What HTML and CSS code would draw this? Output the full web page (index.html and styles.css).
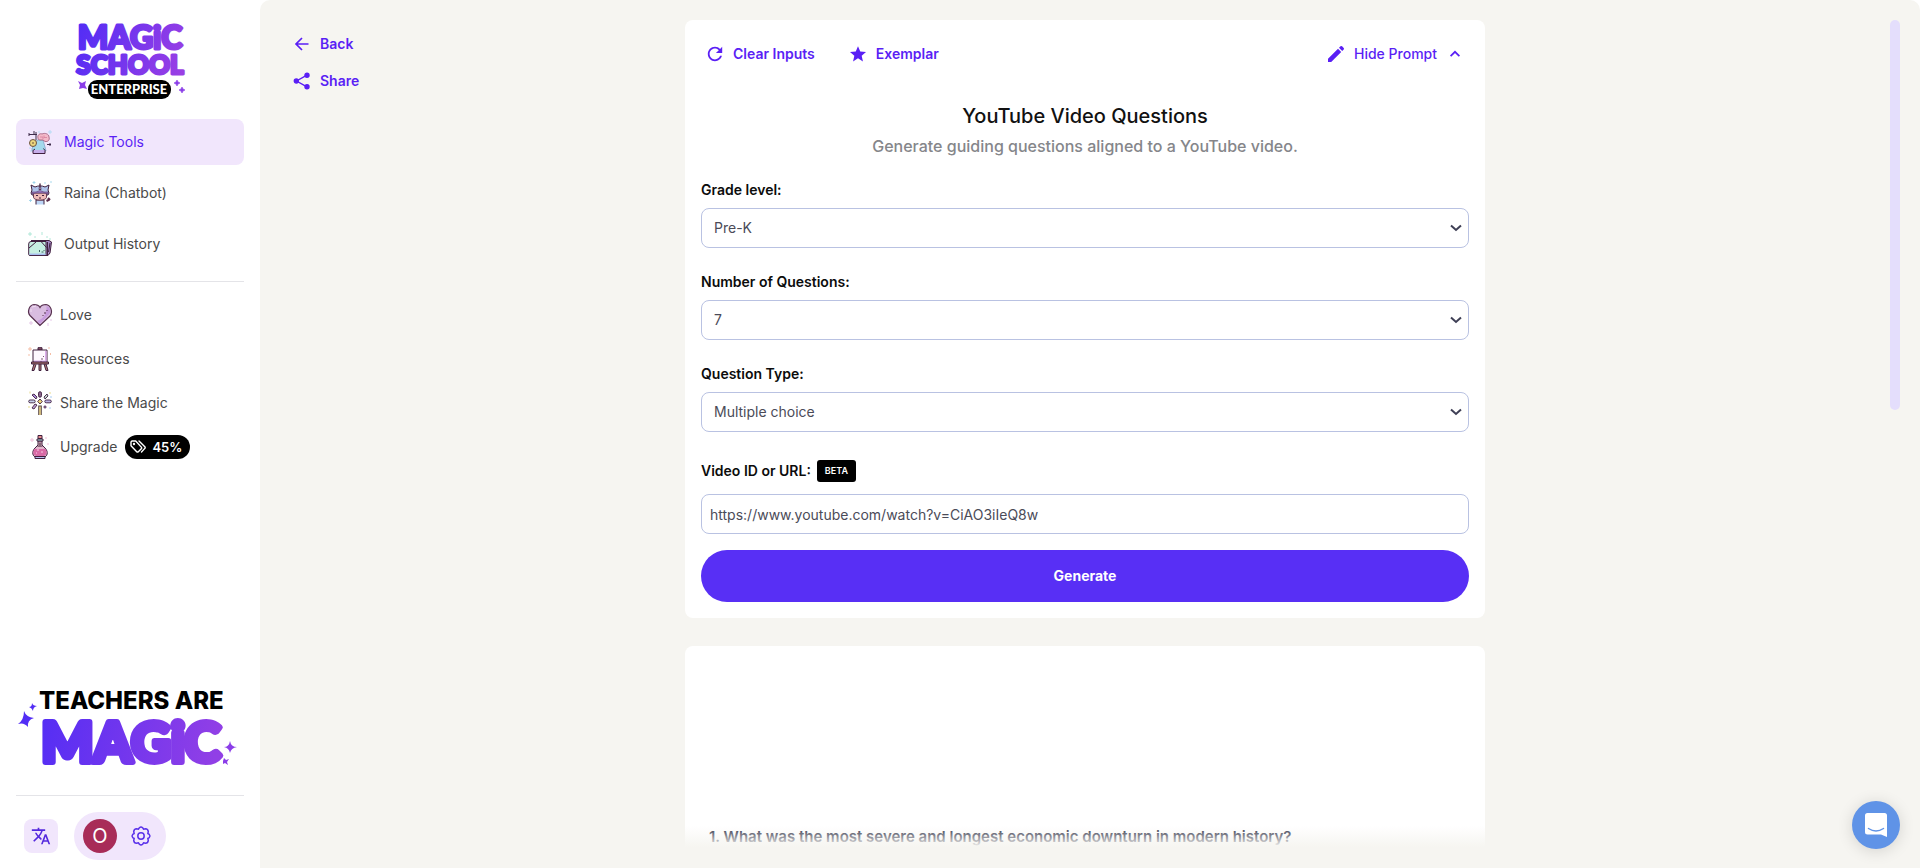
FILE: index.html
```html
<!DOCTYPE html>
<html lang="en">
<head>
<meta charset="utf-8">
<title>YouTube Video Questions</title>
<link rel="stylesheet" href="styles.css">
</head>
<body>
<div class="app">
  <aside class="sidebar">
    <a class="logo" href="#" aria-label="Home">
      <svg width="112" height="80" viewBox="0 0 112 80">
        <defs>
          <linearGradient id="brand" gradientUnits="userSpaceOnUse" x1="0" y1="0" x2="112" y2="40"><stop offset="0" stop-color="#4f2cf6"/><stop offset="1" stop-color="#9a3fe4"/></linearGradient>
        </defs>
        <g class="brand-text" fill="url(#brand)" stroke="url(#brand)" stroke-width="3" stroke-linejoin="round" text-anchor="middle">
          <text x="56" y="29" font-size="32">MAGiC</text>
          <text x="56" y="54" font-size="26">SCHOOL</text>
        </g>
        <rect x="14" y="60" width="83" height="19" rx="9" fill="#000"/>
        <text class="brand-text" x="55" y="74" font-size="13" text-anchor="middle" fill="#fff">ENTERPRISE</text>
        <g fill="#8a3de8">
          <path d="M4 61l4 2 4-2-1 4 2 4-4-1-4 1 1-4z"/>
          <path d="M103 60l1 2 2 1-2 1-1 2-1-2-2-1 2-1zM108 67l1 2 2 1-2 1-1 2-1-2-2-1 2-1z" stroke="#8a3de8" stroke-width=".6"/>
        </g>
      </svg>
    </a>

    <nav class="nav">
      <a class="nav-item active" href="#">
        <svg class="pic" viewBox="0 0 24 24">
          <path d="M1 4.500h8M6 1v3M8 2v8M1 3v3M19 14.500h4M22 13v3" stroke="#3e2c4b" fill="none"/>
          <path d="M9 10h6l2 7 1 4H4v-3l4-4z" fill="#a3d9ec" stroke="#7c9cc2" stroke-width=".7"/>
          <path d="M10 8c-1-3 2-5 4-4 3-1.500 7 0 7 3 1 3-1 5-4 4.500L15 10h-3c-1.500 0-2-1-2-2z" fill="#f3b9c9" stroke="#9d5876" stroke-width=".8"/>
          <path d="M12 7h3v2M16 5.500v2h3" fill="none" stroke="#d57f9c" stroke-width=".8"/>
          <circle cx="5" cy="13" r="3.500" fill="#ecd67b" stroke="#6b5540"/><path d="M4 13h2" stroke="#6b5540"/>
          <path d="M5 20h12v3.500H5z" fill="#c6aeea"/><path d="M7 19l-2 1.500v3h12v-3l-1.500-2" fill="none" stroke="#40203f"/>
          <path d="M22 0v4M20 2h4M11 1v2M1 18h2M3 20v2" stroke="#a9d9f4" stroke-width=".8"/>
        </svg>
        <span>Magic Tools</span>
      </a>
      <a class="nav-item" href="#">
        <svg class="pic" viewBox="0 0 24 24">
          <path d="M8 23.500V19h8v4.500" fill="#bcd6f6" stroke="#40203f"/>
          <path d="M4 9L3 4l4 2c3-1.500 7-1.500 10 0l4-2-1 5 1 3-1 2H4l-1-2z" fill="#afc3ea" stroke="#40203f"/>
          <path d="M5.500 12h13v4.500c-1 3.500-12 3.500-13 0z" fill="#eebcb8" stroke="#6a3b50"/>
          <path d="M4 13v-2h4l4-1.500 4 1.500h4v2l-4-1h-8z" fill="#9b7ac4" stroke="#573a67" stroke-width=".6"/>
          <path d="M12 2.500l-1 6h2z" fill="#efd9f6" stroke="#40203f" stroke-width=".8"/>
          <path d="M8 14.500h2M14 14.500h2M11 17h2" stroke="#40203f"/>
          <path d="M18.500 20l3-1.500M20 17l2 2" stroke="#5c2b4c" stroke-width="2"/>
          <path d="M6 0v3M4.500 1.500h3M17 1v2M22 1h2M1 19.500h3M2.500 18v3" stroke="#93cfe8" stroke-width=".8"/>
        </svg>
        <span>Raina (Chatbot)</span>
      </a>
      <a class="nav-item" href="#">
        <svg class="pic" viewBox="0 0 24 24">
          <path d="M3 8.500h18l2.500 1.500L22 21l-2 2.500H3" fill="#a58ac4" stroke="#40203f"/>
          <path d="M.7 12q0-2.500 2.300-2.500h15V23.500H2q-1.300 0-1.300-1.300z" fill="#c6efe2" stroke="#40203f"/>
          <path d="M1 16l7-6M13 9.500l5.500 6M19.500 10v13M22 11l-1.500 9" fill="none" stroke="#40203f"/>
          <path d="M1.500 22.300h16" stroke="#a9bdf0" stroke-width="1.500"/><path d="M11.500 18v2M13.500 20h2M16 18v1" stroke="#3e6264"/>
          <path d="M2 0v4M0 2h4M14 0v3M7 4v2M19 4v2M22 6v2" stroke="#a0e2cf" stroke-width=".8"/>
        </svg>
        <span>Output History</span>
      </a>
    </nav>
    <nav class="nav nav-more">
      <a class="nav-item" href="#">
        <svg class="pic" viewBox="0 0 24 24">
          <path d="M12 22.500L2 12.500C-1 9 1 2 6 1.500c3 0 5 1 6 3 1-2 3-3 6-3 5 .5 7 7.500 4 11.500z" fill="#d9bde0"/>
          <path d="M18.500 3c4.500 2 5 6 2 9l-8.500 9-3-3c7-2 10-8 9.500-15z" fill="#c79bdd"/>
          <path d="M12 22.500L2 12.500C-1 9 1 2 6 1.500c3 0 5 1 6 3 1-2 3-3 6-3 5 .5 7 7.500 4 11.500z" fill="none" stroke="#57304f" stroke-width="1.200"/>
          <path d="M17 9v2M19 7v1M15 12v1" stroke="#57304f"/><path d="M4 4l4-1M3 6v3" stroke="#f1dff2" fill="none"/>
          <path d="M3 18v4M1 20h4M20 20v3M23 16v2" stroke="#e5c6e8"/>
        </svg>
        <span>Love</span>
      </a>
      <a class="nav-item" href="#">
        <svg class="pic" viewBox="0 0 24 24">
          <path d="M6 17l-2 6.500h2l2-6M11 17v6.500h2V17M16 17l2 6.500h2L18 17" fill="#b77d78" stroke="#40203f"/>
          <path d="M10 3V.7h4V3z" fill="#8e5667" stroke="#40203f"/>
          <path d="M5 3h14v12H5z" fill="#fdf8fe" stroke="#40203f"/><path d="M17.800 4v10.200H6" stroke="#d9a9e8" stroke-width="1.500" fill="none"/>
          <path d="M3.500 15h17v2h-17z" fill="#a9706b" stroke="#40203f"/>
          <path d="M14 11v2M15.500 9v1M13 14v1" stroke="#57304f" stroke-width=".8"/>
          <path d="M2 0v4M0 2h4M21 0v2M22.500 6v2M1 7v2" stroke="#f4b79c" stroke-width=".9"/>
        </svg>
        <span>Resources</span>
      </a>
      <a class="nav-item" href="#">
        <svg class="pic" viewBox="0 0 24 24">
          <g stroke="#40203f" stroke-width=".9">
            <rect x="10.500" y=".7" width="3" height="5.500" rx="1.500" fill="#8b668d"/>
            <rect x=".7" y="9" width="6.500" height="2.800" rx="1.400" fill="#c9d3ee"/>
            <rect x="16.800" y="9" width="6.500" height="2.800" rx="1.400" fill="#bcb3e4"/>
            <path d="M4 4l2-1 3 3-1 2z" fill="#a98bd6"/><path d="M16 6l3-3 1 2-3 3z" fill="#c4d8cf"/><path d="M4 17l3-4 2 1-3 4z" fill="#c2a3d6"/>
            <path d="M12 8l2.300 2.500L12 13l-2.300-2.500z" fill="#edd57c"/>
            <path d="M17 14.500v3M15.500 16h3" stroke="#6d4b75" stroke-width="1.500"/>
          </g>
          <path d="M12 14.500V24" stroke="#564543" stroke-width="3.600"/><path d="M12 15.500V24" stroke="#cdb77c" stroke-width="2"/>
          <path d="M2 .5v2M22 1v2M1 15v2" stroke="#e7db8c"/><path d="M23 5v2M22 16v2" stroke="#a9cdf4"/>
        </svg>
        <span>Share the Magic</span>
      </a>
      <a class="nav-item" href="#">
        <svg class="pic" viewBox="0 0 24 24">
          <path d="M10 6h4v4l3 3c4 4 2 9-1 9H8c-3 0-5-5-1-9l3-3z" fill="#e3b6cc" stroke="#40203f"/>
          <path d="M10 .5h4v3h-4z" fill="#e58c8c" stroke="#40203f"/><path d="M9 4h6v2H9z" fill="#a5dedb" stroke="#40203f"/>
          <path d="M6.500 14h11c2 3 1 6-1.500 7H8c-3-1-3.500-4-1.500-7z" fill="#d96aa6"/><path d="M9 15h2M13 17h2M8 18h1" stroke="#f8cbe2"/>
          <path d="M10.500 7.500h3v3l1.500 1.500H9l1.500-1.500z" fill="#876778"/><path d="M7 21.500h10v2H7z" fill="#b6bdec" stroke="#40203f"/>
          <path d="M4 3v4M2 5h4M18 2v2M20 8v2" stroke="#f1c1da"/>
        </svg>
        <span>Upgrade</span>
        <span class="deal">
          <svg width="17" height="16" viewBox="0 0 17 16" fill="none" stroke="#fff" stroke-width="1.400" stroke-linejoin="round" stroke-linecap="round"><path d="M1 3.500v3.200l5.700 6q.8.800 1.600 0l3-3q.8-.8 0-1.600L5.700 2H2.200Q1 2 1 3.500z"/><path d="M9 2l5.800 5.800q.8.800 0 1.600L11.500 13"/><circle cx="4" cy="5" r=".5"/></svg>
          45%
        </span>
      </a>
    </nav>

    <div class="sidebar-foot">
      <svg class="slogan" viewBox="0 0 228 84">
        <defs>
          <linearGradient id="slogan-fill" gradientUnits="userSpaceOnUse" x1="20" y1="0" x2="205" y2="30"><stop offset="0" stop-color="#522df5"/><stop offset="1" stop-color="#913fe6"/></linearGradient>
        </defs>
        <text class="slogan-top" x="23" y="20" font-size="24">TEACHERS ARE</text>
        <text class="brand-text" x="115" y="73" fill="url(#slogan-fill)" stroke="url(#slogan-fill)" stroke-width="6" stroke-linejoin="round" text-anchor="middle" font-size="55">MAGiC</text>
        <path d="M8 22q2 6 10 7-7 2-6 9-4-5-10-3 6-4 6-13zM16 14q1 3 5 3-4 1-4 5-1-3-4-4 3 0 3-4z" fill="#522df5"/>
        <path d="M214 52q1 6 7 6-6 1-7 6-1-5-6-6 5 0 6-6zM208 69l2 2 3-1-2 3 1 3-3-2-2 1v-3z" fill="#8b3de8"/>
      </svg>
      <div class="account">
        <button class="language" aria-label="Language">
          <svg width="20" height="20" viewBox="0 0 24 24" fill="#5529dd"><path d="m12.870 15.070-2.540-2.510.03-.03c1.740-1.940 2.980-4.170 3.710-6.530H17V4h-7V2H8v2H1v1.990h11.170C11.500 7.920 10.440 9.750 9 11.350 8.070 10.320 7.300 9.190 6.690 8h-2c.73 1.630 1.730 3.170 2.980 4.560l-5.090 5.020L4 19l5-5 3.110 3.110zM18.500 10h-2L12 22h2l1.120-3h4.750L21 22h2zm-2.620 7 1.620-4.330L19.120 17z"/></svg>
        </button>
        <button class="profile" aria-label="Account settings">
          <span class="avatar">O</span>
          <svg width="20" height="20" viewBox="0 0 20 20" fill="none" stroke="#5a31ea" stroke-width="1.500" stroke-linejoin="round"><path d="M8.400 1.700Q10 .3 11.600 1.700L12.500 3.200l1.900-.5q2.600 0 2.900 2.900l-.5 1.900 1.500.9q1.400 1.600 0 3.200l-1.500.9.500 1.900q-.3 2.900-2.900 2.900l-1.900-.5-.9 1.500q-1.600 1.400-3.200 0l-.9-1.500-1.900.5q-2.600 0-2.900-2.900l.5-1.900-1.500-.9q-1.400-1.600 0-3.200l1.500-.9-.5-1.900q.3-2.900 2.900-2.900l1.900.5z"/><circle cx="10" cy="10" r="3.200"/></svg>
        </button>
      </div>
    </div>
  </aside>

  <main class="main">
    <div class="page-links">
      <a class="action" href="#"><svg width="18" height="18" viewBox="0 0 18 18" fill="none" stroke="currentColor" stroke-width="1.700"><path d="M15.500 9H3M9 3L3 9l6 6"/></svg>Back</a>
      <button class="action"><svg width="18" height="18" viewBox="0 0 18 18" fill="currentColor" stroke="currentColor" stroke-width="1.400"><path d="M14 3.200L3.500 9 14 14.800" fill="none"/><circle cx="14" cy="3.200" r="2"/><circle cx="3.300" cy="9" r="2"/><circle cx="14" cy="14.800" r="2"/></svg>Share</button>
    </div>

    <div class="column">
      <section class="card">
        <div class="toolbar">
          <button class="action"><svg width="18" height="18" viewBox="2 2 20 20" fill="currentColor"><path d="M17.650 6.350C16.200 4.900 14.210 4 12 4c-4.420 0-7.990 3.580-7.990 8s3.570 8 7.990 8c3.730 0 6.840-2.550 7.730-6h-2.080c-.82 2.330-3.040 4-5.650 4-3.310 0-6-2.690-6-6s2.690-6 6-6c1.660 0 3.140.69 4.220 1.780L13 11h7V4z"/></svg>Clear Inputs</button>
          <button class="action"><svg width="18" height="18" viewBox="0 0 24 24" fill="currentColor"><path d="M12 17.800l6.600 4.200-1.700-7.600 5.800-5.100-7.700-.7L12 1.500 9 8.600l-7.700.7 5.800 5.100L5.400 22z"/></svg>Exemplar</button>
          <button class="action toggle"><svg width="18" height="18" viewBox="0 0 18 18" fill="currentColor"><path d="M1 13.800L11 3.800 14.200 7l-10 10H1zM12 2.800l1.500-1.500q.8-.7 1.600 0l1.600 1.600q.7.800 0 1.600L15.200 6z"/></svg>Hide Prompt<svg class="chevron" width="10" height="18" viewBox="0 0 10 18" fill="none" stroke="currentColor" stroke-width="1.700"><path d="M.6 11.200L5 6.800l4.400 4.400"/></svg></button>
        </div>
        <h1 class="title">YouTube Video Questions</h1>
        <p class="subtitle">Generate guiding questions aligned to a YouTube video.</p>
        <form class="form">
          <div class="field">
            <label for="grade">Grade level:</label>
            <div class="select"><select id="grade"><option>Pre-K</option></select><svg viewBox="0 0 10 6" width="10" height="6"><path d="M0 .5l5 4.500 5-4.500"/></svg></div>
          </div>
          <div class="field">
            <label for="count">Number of Questions:</label>
            <div class="select"><select id="count"><option>7</option></select><svg viewBox="0 0 10 6" width="10" height="6"><path d="M0 .5l5 4.500 5-4.500"/></svg></div>
          </div>
          <div class="field">
            <label for="type">Question Type:</label>
            <div class="select"><select id="type"><option>Multiple choice</option></select><svg viewBox="0 0 10 6" width="10" height="6"><path d="M0 .5l5 4.500 5-4.500"/></svg></div>
          </div>
          <div class="field">
            <div class="label-row"><label for="video">Video ID or URL:</label><span class="beta">BETA</span></div>
            <input class="text-input" id="video" type="text" value="https://www.youtube.com/watch?v=CiAO3iIeQ8w">
          </div>
          <button class="generate" type="button">Generate</button>
        </form>
      </section>
      <section class="card output">
        <p class="question">1. What was the most severe and longest economic downturn in modern history?</p>
      </section>
    </div>
    <div class="scroll-track"><div class="scroll-thumb"></div></div>
    <div class="fade"></div>
    <button class="chat" aria-label="Open chat">
      <svg width="22" height="24" viewBox="0 0 22 24"><path d="M2.500 0h17Q22 0 22 2.500V24l-6-2.500H2.500Q0 21.500 0 19V2.500Q0 0 2.500 0z" fill="#fff"/><path d="M3.500 15.500q7.500 5 15 0" fill="none" stroke="#5f93e7" stroke-width="1.500" stroke-linecap="round"/></svg>
    </button>
  </main>
</div>
</body>
</html>
```

FILE: styles.css
```css
* { box-sizing: border-box; }
body { margin: 0; font-family: Inter, "Liberation Sans", sans-serif; font-size: 14px; line-height: 20px; background: #fff; }
button { font: inherit; border: 0; background: none; padding: 0; cursor: pointer; }
a { color: inherit; text-decoration: none; }
svg { flex: none; overflow: visible; }

.app { display: flex; height: 100vh; }

.sidebar { display: flex; flex-direction: column; width: 260px; padding: 20px 16px 8px; flex: none; }
.logo { align-self: center; height: 80px; margin-bottom: 19px; }
.brand-text { font-family: Lato, sans-serif; font-weight: 900; }
.nav { display: flex; flex-direction: column; gap: 5px; }
.nav-item { display: flex; align-items: center; gap: 12px; height: 46px; padding: 0 12px; border-radius: 8px; color: #4a4a4a; }
.nav-item.active { background: #f1e6fc; color: #5a1ff5; }
.pic { width: 24px; height: 24px; }
.nav-more { gap: 0; margin-top: 14px; padding-top: 11px; border-top: 1px solid #e4e4e8; }
.nav-more .nav-item { gap: 8px; height: 44px; }
.deal { display: flex; align-items: center; gap: 5px; height: 24px; padding: 0 8px 0 5px; border-radius: 12px; background: #000; color: #fff; font-size: 13px; font-weight: 600; }

.sidebar-foot { margin-top: auto; }
.slogan { display: block; width: 100%; height: 84px; margin-bottom: 22px; }
.slogan-top { font-family: Inter, sans-serif; font-weight: 800; }
.account { display: flex; align-items: center; gap: 16px; padding: 16px 8px 0; border-top: 1px solid #e4e4e8; }
.language { display: grid; place-items: center; width: 34px; height: 34px; border-radius: 8px; background: #f1e6fc; }
.profile { display: flex; align-items: center; gap: 14px; height: 48px; padding: 0 15px 0 9px; border-radius: 24px; background: #f1e6fc; }
.avatar { display: grid; place-items: center; width: 34px; height: 34px; border-radius: 50%; background: #a82c58; color: #fff; font-size: 20px; }

.main { position: relative; flex: 1; display: grid; grid-template-columns: 1fr minmax(0, 800px) 1fr 10px; grid-template-rows: minmax(0, 1fr); padding: 20px 20px 0; overflow: hidden; background: #f6f5f1; border-radius: 10px 10px 0 0; }
.page-links { display: flex; flex-direction: column; align-items: flex-start; gap: 17px; padding: 14px 13px; }
.action { display: flex; align-items: center; gap: 9px; color: #5a1ff5; font-weight: 600; }
.column { display: flex; flex-direction: column; gap: 28px; grid-column: 2; }
.card { flex: none; padding: 24px 16px 16px; background: #fff; border-radius: 8px; }
.toolbar { display: flex; gap: 34px; padding: 0 9px 0 5px; }
.toggle { margin-left: auto; font-weight: 500; }
.chevron { margin-left: 4px; }
.title { margin: 38px 0 0; text-align: center; font-size: 20px; line-height: 28px; font-weight: 500; color: #111; }
.subtitle { margin: 4px 0 22px; text-align: center; font-size: 16px; line-height: 24px; font-weight: 500; color: #85868a; }
.form { display: flex; flex-direction: column; gap: 24px; }
.field { display: flex; flex-direction: column; gap: 8px; color: #0c0c0c; font-weight: 600; }
.label-row { display: flex; align-items: center; gap: 6px; height: 30px; }
.beta { padding: 0 8px; border-radius: 3px; background: #000; color: #fff; font-size: 9px; line-height: 22px; }
.select { display: grid; align-items: center; }
.select select, .select svg { grid-area: 1 / 1; }
.select svg { justify-self: end; margin-right: 8px; fill: none; stroke: #3e3f55; stroke-width: 2; pointer-events: none; }
select, .text-input { appearance: none; width: 100%; height: 40px; padding: 0 12px; border: 1px solid #b9c2e2; border-radius: 8px; background: #fff; color: #4b4b58; font: inherit; font-weight: 400; }
.text-input { padding: 0 8px; }
.generate { height: 52px; margin-top: -8px; border-radius: 26px; background: #582ff5; color: #fff; font-weight: 700; }
.output { padding: 180px 24px 24px; }
.question { margin: 0; font-size: 15px; line-height: 22px; font-weight: 600; color: #262940; }

.scroll-track { grid-column: 4; }
.scroll-thumb { height: 46%; border-radius: 5px; background: #e4defc; }
.fade { position: absolute; left: 0; right: 10px; bottom: 0; height: 42px; background: linear-gradient(#f6f5f100, #f6f5f1 50%); }
.chat { position: absolute; right: 20px; bottom: 19px; display: grid; place-items: center; width: 48px; height: 48px; border-radius: 50%; background: #5f93e7; box-shadow: 0 2px 16px #00000024; }
```
